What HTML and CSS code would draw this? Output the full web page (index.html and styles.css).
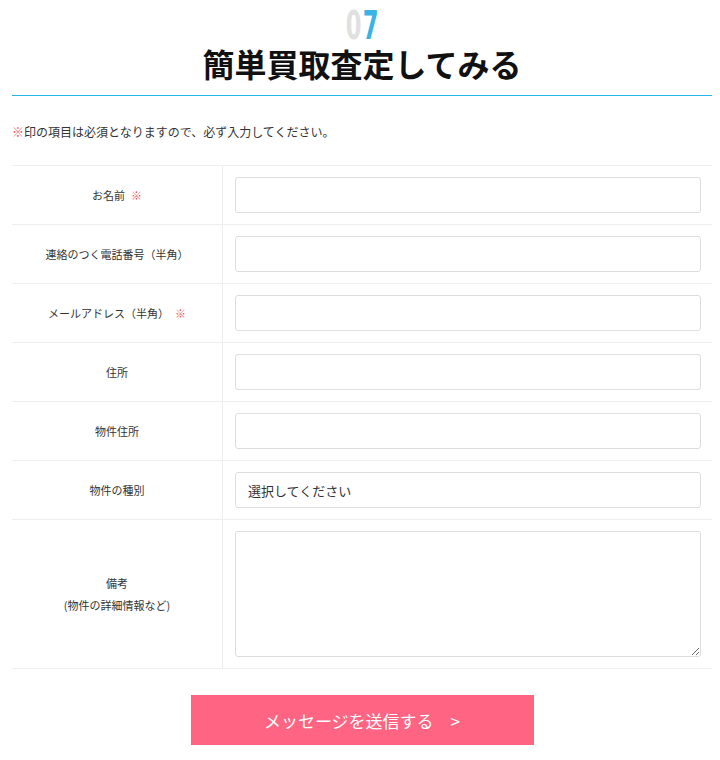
FILE: index.html
```html
<!DOCTYPE html>
<html lang="ja">
<head>
    <meta charset="UTF-8">
    <meta name="viewport" content="width=device-width, initial-scale=1.0">
    <title>簡単買取査定してみる</title>
    <link rel="stylesheet" href="styles.css">
</head>
<body>
    <div class="wrap">
        <div class="heading">
            <p class="num"><span class="num_a">0</span><span class="num_b">7</span></p>
            <h2 class="title">簡単買取査定してみる</h2>
        </div>

        <p class="note"><span class="req">※</span>印の項目は必須となりますので、必ず入力してください。</p>

        <form class="form" onsubmit="return false;">
            <div class="row">
                <div class="label"><span>お名前<span class="req mark">※</span></span></div>
                <div class="field"><input type="text" class="input"></div>
            </div>
            <div class="row">
                <div class="label"><span>連絡のつく電話番号（半角）</span></div>
                <div class="field"><input type="text" class="input"></div>
            </div>
            <div class="row">
                <div class="label"><span>メールアドレス（半角）<span class="req mark">※</span></span></div>
                <div class="field"><input type="text" class="input"></div>
            </div>
            <div class="row">
                <div class="label"><span>住所</span></div>
                <div class="field"><input type="text" class="input"></div>
            </div>
            <div class="row">
                <div class="label"><span>物件住所</span></div>
                <div class="field"><input type="text" class="input"></div>
            </div>
            <div class="row">
                <div class="label"><span>物件の種別</span></div>
                <div class="field">
                    <select class="input select">
                        <option>選択してください</option>
                        <option>マンション</option>
                        <option>一戸建て</option>
                        <option>土地</option>
                    </select>
                </div>
            </div>
            <div class="row">
                <div class="label"><span>備考<br>(物件の詳細情報など)</span></div>
                <div class="field"><textarea class="input area"></textarea></div>
            </div>

            <div class="submit">
                <button type="submit" class="btn">メッセージを送信する　&gt;</button>
            </div>
        </form>
    </div>
</body>
</html>
```

FILE: styles.css
```css
body {
    margin: 0;
    background-color: #fff;
    color: #333;
    font-family: "Noto Sans CJK JP", "Noto Sans", sans-serif;
}

.wrap {
    padding: 0 8px 0 12px;
}

.heading {
    text-align: center;
    border-bottom: 1px solid #29b6e8; /* голубая линия под заголовком */
    padding-bottom: 11px;
}

.num {
    margin: 0;
    padding-top: 10px;
    height: 32px;
    display: flex;
    justify-content: center;
    align-items: center;
    font-family: "DejaVu Sans Condensed", sans-serif;
    font-weight: bold;
    font-size: 28px;
}

/* узкие и высокие цифры номера раздела */
.num span {
    display: block;
    width: 17px;
    height: 22px;
    line-height: 22px;
    transform: scale(0.9, 1.4);
}

.num_a {
    color: #e0e0e0;
}

.num_b {
    color: #3ab4e4;
}

.title {
    margin: 0;
    font-size: 32px;
    line-height: 42px;
    font-weight: bold;
    color: #111;
}

.note {
    margin: 28px 0 25px;
    font-size: 12px;
    line-height: 16px;
}

.req {
    color: #f0555a;
}

.mark {
    margin-left: 6px;
}

.row {
    display: flex;
    border-bottom: 1px solid #eee;
}

.row:first-child {
    border-top: 1px solid #eee;
}

.label {
    width: 210px;
    flex-shrink: 0;
    border-right: 1px solid #eee;
    display: flex;
    align-items: center;
    justify-content: center;
    text-align: center;
    font-size: 11px;
    line-height: 22px;
}

.field {
    flex-grow: 1;
    padding: 11px 11px 11px 12px;
}

.input {
    display: block;
    width: 100%;
    height: 36px;
    box-sizing: border-box;
    border: 1px solid #ddd;
    border-radius: 3px;
    padding: 0 12px;
    font-family: inherit;
    font-size: 13px;
    color: #333;
    background-color: #fff;
}

.select {
    appearance: none;
    -webkit-appearance: none;
}

.area {
    height: 126px;
    padding: 8px 12px;
    resize: vertical;
}

.submit {
    display: flex;
    justify-content: center;
    padding: 26px 0 20px;
}

.btn {
    width: 343px;
    height: 50px;
    border: none;
    background-color: #ff6482;
    color: #fff;
    font-family: inherit;
    font-size: 17px;
    cursor: pointer;
}

.btn:hover {
    background-color: #ff8198;
}
```
